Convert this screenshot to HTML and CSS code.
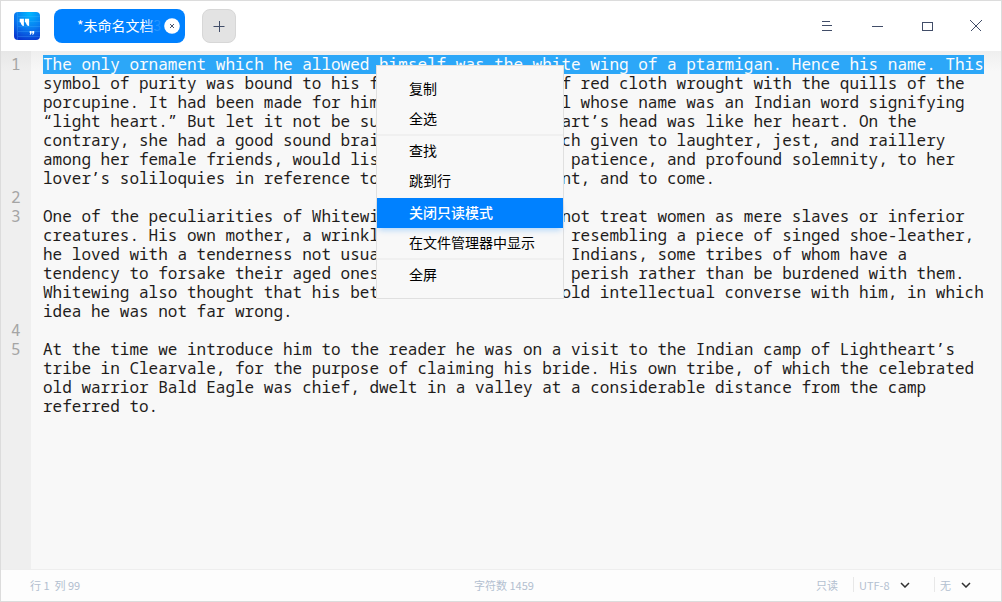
FILE: index.html
```html
<!DOCTYPE html>
<html lang="zh-CN">
<head>
<meta charset="utf-8">
<title>未命名文档</title>
<link rel="stylesheet" href="styles.css">
</head>
<body>
<div class="window">
  <header class="titlebar">
    <svg class="logo" width="28" height="30" viewBox="0 0 28 30">
      <defs>
        <radialGradient id="glow" cx=".6" cy=".05" r="1"><stop offset="0" stop-color="#00b8ff"/><stop offset=".55" stop-color="#087bf0"/><stop offset="1" stop-color="#0937cf"/></radialGradient>
      </defs>
      <rect x="1" y="1" width="26" height="28" rx="4" fill="url(#glow)"/>
      <path d="M4.500 1v28M5 5.500h22M5 10.500h22M5 15.500h22M5 20.500h22M5 25.500h22" stroke="#54bdff" stroke-opacity=".25" fill="none"/>
      <path d="M6.700 7.700h4.200v7.400c-2.200-.3-2.900-1.800-3.200-3.600l-1-.3zM11.900 7.700h4.200v7.400c-2.200-.3-2.900-1.800-3.200-3.600l-1-.3zM16.700 20h2v2.100l-1.100 1.700h-.9l.5-1.700h-.5zM19.200 20h2v2.100l-1.100 1.700h-.9l.5-1.700h-.5z" fill="#fff"/>
    </svg>
    <div class="tab">
      <span class="tab-title">*未命名文档<span class="tab-fade">3</span></span>
      <svg class="tab-close" width="16" height="16" viewBox="0 0 16 16"><circle cx="8" cy="8" r="7.800" fill="#fff"/><path d="M6 6l4 4M10 6l-4 4" stroke="#46516a" stroke-width="1"/></svg>
    </div>
    <button class="add"><svg width="12" height="12" viewBox="0 0 12 12"><path d="M.5 6.500h11M6.500 1v11" stroke="#414d68" fill="none"/></svg></button>
    <svg class="controls" width="162" height="14" viewBox="0 0 162 14" fill="none" stroke="#414d68" shape-rendering="crispEdges">
      <path d="M1 2.500h8M1 6.500h10M1 11.500h10M51 7.500h11"/>
      <path d="M101.500 3.500h10v8h-10z"/>
      <path d="M149.500 1.500l11 11M160.500 1.500l-11 11"/>
    </svg>
  </header>
  <main class="editor">
    <pre class="gutter">1






2
3





4
5</pre>
    <pre class="text"><span class="current">The only ornament which he allowed himself was the white wing of a ptarmigan. Hence his name. This</span>
symbol of purity was bound to his forehead by a band of red cloth wrought with the quills of the
porcupine. It had been made for him by a dark-eyed girl whose name was an Indian word signifying
“light heart.” But let it not be supposed that Lightheart’s head was like her heart. On the
contrary, she had a good sound brain, and, although much given to laughter, jest, and raillery
among her female friends, would listen with inimitable patience, and profound solemnity, to her
lover’s soliloquies in reference to things past, present, and to come.

One of the peculiarities of Whitewing was that he did not treat women as mere slaves or inferior
creatures. His own mother, a wrinkled little old woman resembling a piece of singed shoe-leather,
he loved with a tenderness not usual among the warlike Indians, some tribes of whom have a
tendency to forsake their aged ones, and leave them to perish rather than be burdened with them.
Whitewing also thought that his betrothed was fit to hold intellectual converse with him, in which
idea he was not far wrong.

At the time we introduce him to the reader he was on a visit to the Indian camp of Lightheart’s
tribe in Clearvale, for the purpose of claiming his bride. His own tribe, of which the celebrated
old warrior Bald Eagle was chief, dwelt in a valley at a considerable distance from the camp
referred to.</pre>
  </main>
  <footer class="status">
    <span class="pos">行 1&nbsp; 列 99</span>
    <span class="count">字符数 1459</span>
    <div class="options">
      <span class="mode">只读</span>
      <span class="select enc">UTF-8 <svg width="10" height="6" viewBox="0 0 10 6"><path d="M1 1l4 4 4-4" fill="none" stroke="#303030" stroke-width="1.500"/></svg></span>
      <span class="select lang">无 <svg width="10" height="6" viewBox="0 0 10 6"><path d="M1 1l4 4 4-4" fill="none" stroke="#303030" stroke-width="1.500"/></svg></span>
    </div>
  </footer>
  <nav class="menu">
    <div class="item">复制</div>
    <div class="item">全选</div>
    <div class="sep"></div>
    <div class="item">查找</div>
    <div class="item">跳到行</div>
    <div class="sep plain"></div>
    <div class="item active">关闭只读模式</div>
    <div class="item">在文件管理器中显示</div>
    <div class="sep"></div>
    <div class="item">全屏</div>
  </nav>
</div>
</body>
</html>
```
FILE: styles.css
```css
* { box-sizing: border-box; }
body { margin: 0; font-family: "Noto Sans CJK SC", sans-serif; }
.window { position: relative; width: 1002px; height: 602px; border: 1px solid #dcdcdc; background: #f8f8f8; display: flex; flex-direction: column; overflow: hidden; }
.titlebar { height: 50px; background: #fff; display: flex; align-items: center; padding-left: 12px; flex: none; }
.logo { flex: none; }
.tab { width: 131px; height: 34px; margin-left: 13px; border-radius: 8px; background: #0081ff; display: flex; align-items: center; padding-left: 23px; color: #fff; font-size: 14px; }
.tab-title { position: relative; width: 84px; height: 24px; line-height: 22px; overflow: hidden; white-space: nowrap; }
.tab-title::after { content: ""; position: absolute; right: 0; top: 0; width: 17px; height: 100%; background: linear-gradient(90deg, rgba(0,129,255,0), rgba(0,129,255,.8)); }
.tab-fade { color: rgba(255,255,255,.4); }
.tab-close { margin-left: 3px; flex: none; }
.add { width: 34px; height: 34px; margin-left: 17px; border: 1px solid #d7d7d7; border-radius: 8px; background: #e3e3e3; display: flex; align-items: center; justify-content: center; padding: 0; }
.controls { margin-left: auto; margin-right: 18px; }
.editor { flex: 1; display: flex; background: linear-gradient(#efefef, #f8f8f8 20px); font-family: "Noto Sans Mono", "Noto Sans CJK SC", monospace; font-size: 16px; line-height: 19px; }
.editor pre { margin: 0; font: inherit; }
.gutter { width: 30px; padding: 4px 10.5px 0 0; text-align: right; background: linear-gradient(#e7e7e7, #efefef 20px); color: #a5a5a5; }
.text { padding: 4px 0 0 12px; color: #1f1c1b; }
.current { display: inline-block; height: 19px; background: #2ca7f8; color: #fcfcfc; vertical-align: top; }
.status { height: 32px; flex: none; background: #fdfdfd; border-top: 1px solid #eee; display: grid; grid-template-columns: 444px 1fr auto; align-items: center; padding: 0 0 2px 29px; color: #b3c0d0; font-size: 11px; line-height: 18px; }
.options { display: flex; align-items: center; padding-right: 30px; }
.mode { width: 37px; }
.select { display: flex; align-items: center; height: 15px; border-left: 1px solid #e8e8e8; padding-left: 5px; }
.enc { width: 81px; gap: 10px; }
.lang { gap: 10px; }
.menu { position: absolute; left: 375px; top: 64px; width: 188px; height: 234px; padding: 8px 0; border: 1px solid #e0e0e0; background: #f8f8f8; font-size: 14px; color: #000; }
.item { height: 30px; line-height: 28px; padding-left: 32px; }
.sep { height: 2px; background: #f0f0f0; }
.plain { background: none; }
.active { background: #0081ff; color: #fff; font-weight: 500; box-shadow: 0 4px 6px -2px rgba(0,129,255,.3); }
```
